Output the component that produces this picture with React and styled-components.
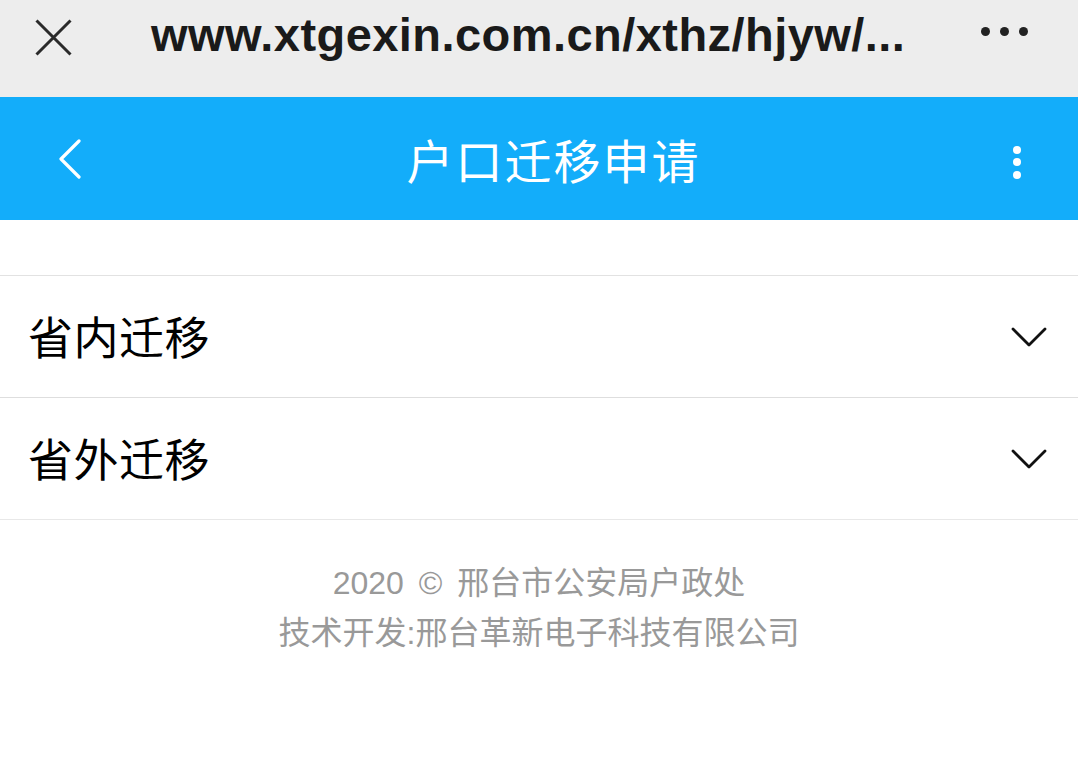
import styled, { createGlobalStyle } from "styled-components";

const GlobalStyle = createGlobalStyle`
  html, body {
    margin: 0;
    padding: 0;
    background: #fff;
  }
  body {
    font-family: "Noto Sans CJK SC", "Noto Sans", sans-serif;
  }
`;

const Page = styled.div`
  width: 1078px;
  min-height: 777px;
  background: #fff;
`;

const BrowserBar = styled.div`
  height: 97px;
  background: #ededed;
  display: flex;
  align-items: center;
  padding: 0 0 0 35px;
  box-sizing: border-box;
`;

const Url = styled.div`
  margin-left: 79px;
  font-family: "Liberation Sans", Arial, sans-serif;
  font-weight: 700;
  font-size: 47px;
  letter-spacing: 0.45px;
  color: #1a1a1a;
  white-space: nowrap;
  margin-top: -28px;
`;

const IconWrap = styled.div`
  display: flex;
  align-items: center;
  margin-top: ${(p) => p.top || 0}px;
`;

const MoreDots = styled.div`
  margin-left: auto;
  margin-right: 50px;
  margin-top: -34px;
  display: flex;
  gap: 10px;
`;

const Dot = styled.span`
  width: ${(p) => p.size}px;
  height: ${(p) => p.size}px;
  border-radius: 50%;
  background: ${(p) => p.color};
  display: block;
`;

const Header = styled.div`
  height: 123px;
  background: #13adfa;
  display: flex;
  align-items: center;
  justify-content: space-between;
  padding: 0 57px 0 58px;
  box-sizing: border-box;
`;

const Title = styled.h1`
  margin: 0 0 0 12px;
  font-size: 47px;
  font-weight: 400;
  color: #fff;
  letter-spacing: 2px;
`;

const Kebab = styled.div`
  display: flex;
  flex-direction: column;
  gap: 4.5px;
  margin-top: 7px;
`;

const Spacer = styled.div`
  height: 55px;
`;

const List = styled.div`
  border-top: 1px solid #e2e2e2;
`;

const Row = styled.div`
  height: 122px;
  display: flex;
  align-items: center;
  justify-content: space-between;
  padding: 0 31px 0 28px;
  border-bottom: 1px solid #dedede;
  box-sizing: border-box;
  &:last-child {
    border-bottom-color: #e8e8e8;
  }
`;

const RowTitle = styled.span`
  font-size: 45px;
  color: #000;
  letter-spacing: 0.5px;
  margin-top: -2px;
`;

const Footer = styled.footer`
  padding-top: 38px;
  text-align: center;
  color: #999;
  font-family: "Liberation Sans", "Noto Sans CJK SC", sans-serif;
  font-size: 32px;
  line-height: 50px;
`;

const FooterLine = styled.div`
  word-spacing: ${(p) => p.wordSpacing || 0}px;
`;

export default function App() {
  return (
    <Page>
      <GlobalStyle />
      <BrowserBar>
        <IconWrap top={-22}>
          <svg width="37" height="37" viewBox="0 0 37 37">
            <path d="M1.5 1.5 L35.5 35.5 M35.5 1.5 L1.5 35.5" stroke="#2a2a2a" strokeWidth="3" />
          </svg>
        </IconWrap>
        <Url>www.xtgexin.com.cn/xthz/hjyw/...</Url>
        <MoreDots>
          <Dot size={9} color="#222" />
          <Dot size={9} color="#222" />
          <Dot size={9} color="#222" />
        </MoreDots>
      </BrowserBar>
      <Header>
        <svg width="24" height="40" viewBox="0 0 24 40">
          <path d="M21 2 L3 20 L21 38" fill="none" stroke="#fff" strokeWidth="3.2" strokeLinecap="round" strokeLinejoin="round" />
        </svg>
        <Title>户口迁移申请</Title>
        <Kebab>
          <Dot size={8} color="#fff" />
          <Dot size={8} color="#fff" />
          <Dot size={8} color="#fff" />
        </Kebab>
      </Header>
      <Spacer />
      <List>
        {["省内迁移", "省外迁移"].map((t) => (
          <Row key={t}>
            <RowTitle>{t}</RowTitle>
            <svg width="36" height="20" viewBox="0 0 36 20">
              <path d="M2 2 L18 18 L34 2" fill="none" stroke="#111" strokeWidth="2.8" strokeLinecap="round" strokeLinejoin="round" />
            </svg>
          </Row>
        ))}
      </List>
      <Footer>
        <FooterLine wordSpacing={6}>2020 © 邢台市公安局户政处</FooterLine>
        <FooterLine>技术开发:邢台革新电子科技有限公司</FooterLine>
      </Footer>
    </Page>
  );
}
